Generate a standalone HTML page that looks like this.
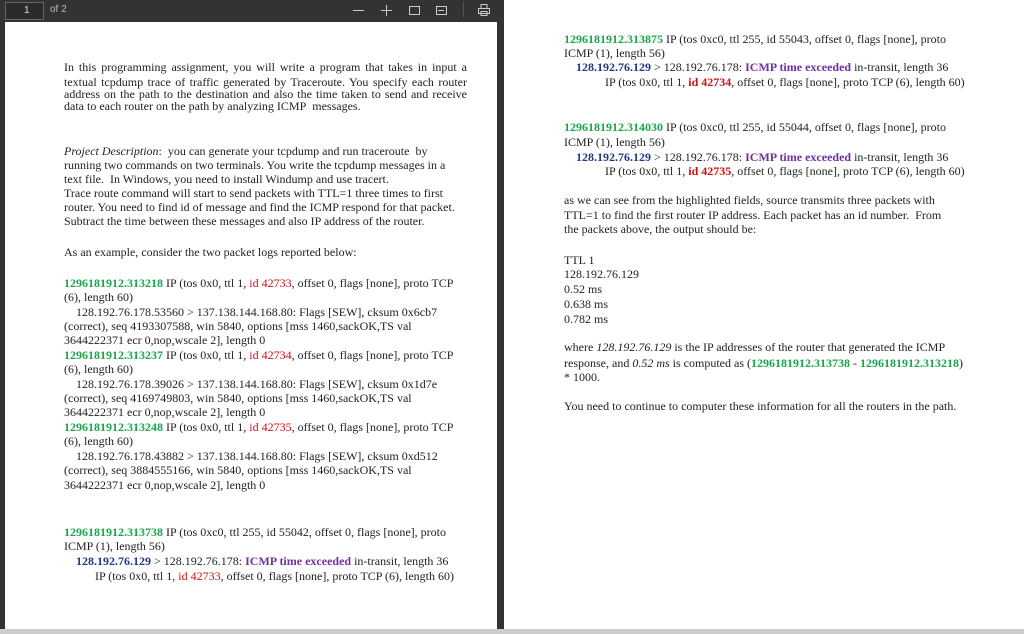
<!DOCTYPE html>
<html><head><meta charset="utf-8"><style>
body{margin:0;width:1024px;height:634px;overflow:hidden;background:#fff;position:relative;font-family:"Liberation Serif",serif;font-size:12px;color:#222}
.l{position:absolute;white-space:nowrap;line-height:14px}
.j{white-space:normal;text-align:justify;text-align-last:justify;height:14px;overflow:hidden}
.g{color:#1aa64a;font-weight:bold}
.r{color:#d01010}
.rb{color:#d01010;font-weight:bold}
.n{color:#1f3a80;font-weight:bold}
.p{color:#7030a0;font-weight:bold}
</style></head><body>
<div style="position:absolute;left:0;top:0;width:497px;height:22px;background:#333"></div>
<div style="position:absolute;left:5px;top:2px;width:37px;height:16px;border:1px solid #666;background:#2b2b2b;color:#ddd;font-family:'Liberation Sans',sans-serif;font-size:10px;line-height:16px;text-indent:18px">1</div>
<div style="position:absolute;left:50px;top:4px;color:#bbb;font-family:'Liberation Sans',sans-serif;font-size:10px">of 2</div>
<div style="position:absolute;left:353px;top:10px;width:11px;height:1px;background:#ccc"></div>
<div style="position:absolute;left:381px;top:10px;width:11px;height:1px;background:#ccc"></div>
<div style="position:absolute;left:386px;top:5px;width:1px;height:11px;background:#ccc"></div>
<div style="position:absolute;left:409px;top:6px;width:9px;height:7px;border:1px solid #ccc"></div>
<div style="position:absolute;left:436px;top:6px;width:9px;height:7px;border:1px solid #ccc"></div>
<div style="position:absolute;left:438px;top:10px;width:6px;height:1px;background:#ccc"></div>
<div style="position:absolute;left:463px;top:2px;width:1px;height:15px;background:#555"></div>
<svg style="position:absolute;left:477px;top:3px" width="14" height="14" viewBox="0 0 14 14" fill="none" stroke="#ccc"><rect x="4" y="1.5" width="6" height="4"/><rect x="1.5" y="5.5" width="11" height="5"/><rect x="4" y="8.5" width="6" height="4"/></svg>
<div style="position:absolute;left:0;top:22px;width:5px;height:612px;background:#333"></div>
<div style="position:absolute;left:497px;top:0;width:7px;height:634px;background:#333"></div>
<div style="position:absolute;left:0;top:629px;width:1024px;height:5px;background:#ccc"></div>

<div class="l j" style="left:64px;top:60px;width:403px">In this programming assignment, you will write a program that takes in input a</div>
<div class="l j" style="left:64px;top:75px;width:403px">textual tcpdump trace of traffic generated by Traceroute. You specify each router</div>
<div class="l j" style="left:64px;top:87px;width:403px">address on the path to the destination and also the time taken to send and receive</div>
<div class="l" style="left:64px;top:99px">data to each router on the path by analyzing ICMP&nbsp; messages.</div>

<div class="l" style="left:64px;top:144px"><i>Project Description</i>:&nbsp; you can generate your tcpdump and run traceroute&nbsp; by</div>
<div class="l" style="left:64px;top:158px">running two commands on two terminals. You write the tcpdump messages in a</div>
<div class="l" style="left:64px;top:172px">text file.&nbsp; In Windows, you need to install Windump and use tracert.</div>
<div class="l" style="left:64px;top:186px">Trace route command will start to send packets with TTL=1 three times to first</div>
<div class="l" style="left:64px;top:200px">router. You need to find id of message and find the ICMP respond for that packet.</div>
<div class="l" style="left:64px;top:214px">Subtract the time between these messages and also IP address of the router.</div>

<div class="l" style="left:64px;top:245px">As an example, consider the two packet logs reported below:</div>

<div class="l" style="left:64px;top:276px"><span class="g">1296181912.313218</span> IP (tos 0x0, ttl 1, <span class="r">id 42733</span>, offset 0, flags [none], proto TCP</div>
<div class="l" style="left:64px;top:290px">(6), length 60)</div>
<div class="l" style="left:64px;top:305px">&nbsp;&nbsp;&nbsp; 128.192.76.178.53560 &gt; 137.138.144.168.80: Flags [SEW], cksum 0x6cb7</div>
<div class="l" style="left:64px;top:319px">(correct), seq 4193307588, win 5840, options [mss 1460,sackOK,TS val</div>
<div class="l" style="left:64px;top:333px">3644222371 ecr 0,nop,wscale 2], length 0</div>
<div class="l" style="left:64px;top:348px"><span class="g">1296181912.313237</span> IP (tos 0x0, ttl 1, <span class="r">id 42734</span>, offset 0, flags [none], proto TCP</div>
<div class="l" style="left:64px;top:362px">(6), length 60)</div>
<div class="l" style="left:64px;top:377px">&nbsp;&nbsp;&nbsp; 128.192.76.178.39026 &gt; 137.138.144.168.80: Flags [SEW], cksum 0x1d7e</div>
<div class="l" style="left:64px;top:391px">(correct), seq 4169749803, win 5840, options [mss 1460,sackOK,TS val</div>
<div class="l" style="left:64px;top:405px">3644222371 ecr 0,nop,wscale 2], length 0</div>
<div class="l" style="left:64px;top:420px"><span class="g">1296181912.313248</span> IP (tos 0x0, ttl 1, <span class="r">id 42735</span>, offset 0, flags [none], proto TCP</div>
<div class="l" style="left:64px;top:434px">(6), length 60)</div>
<div class="l" style="left:64px;top:449px">&nbsp;&nbsp;&nbsp; 128.192.76.178.43882 &gt; 137.138.144.168.80: Flags [SEW], cksum 0xd512</div>
<div class="l" style="left:64px;top:463px">(correct), seq 3884555166, win 5840, options [mss 1460,sackOK,TS val</div>
<div class="l" style="left:64px;top:478px">3644222371 ecr 0,nop,wscale 2], length 0</div>

<div class="l" style="left:64px;top:525px"><span class="g">1296181912.313738</span> IP (tos 0xc0, ttl 255, id 55042, offset 0, flags [none], proto</div>
<div class="l" style="left:64px;top:539px">ICMP (1), length 56)</div>
<div class="l" style="left:76px;top:554px"><span class="n">128.192.76.129</span> &gt; 128.192.76.178: <span class="p">ICMP time exceeded</span> in-transit, length 36</div>
<div class="l" style="left:95px;top:569px">IP (tos 0x0, ttl 1, <span class="r">id 42733</span>, offset 0, flags [none], proto TCP (6), length 60)</div>

<div class="l" style="left:564px;top:32px"><span class="g">1296181912.313875</span> IP (tos 0xc0, ttl 255, id 55043, offset 0, flags [none], proto</div>
<div class="l" style="left:564px;top:46px">ICMP (1), length 56)</div>
<div class="l" style="left:576px;top:60px"><span class="n">128.192.76.129</span> &gt; 128.192.76.178: <span class="p">ICMP time exceeded</span> in-transit, length 36</div>
<div class="l" style="left:605px;top:75px">IP (tos 0x0, ttl 1, <span class="rb">id 42734</span>, offset 0, flags [none], proto TCP (6), length 60)</div>

<div class="l" style="left:564px;top:120px"><span class="g">1296181912.314030</span> IP (tos 0xc0, ttl 255, id 55044, offset 0, flags [none], proto</div>
<div class="l" style="left:564px;top:135px">ICMP (1), length 56)</div>
<div class="l" style="left:576px;top:150px"><span class="n">128.192.76.129</span> &gt; 128.192.76.178: <span class="p">ICMP time exceeded</span> in-transit, length 36</div>
<div class="l" style="left:605px;top:164px">IP (tos 0x0, ttl 1, <span class="rb">id 42735</span>, offset 0, flags [none], proto TCP (6), length 60)</div>

<div class="l" style="left:564px;top:193px">as we can see from the highlighted fields, source transmits three packets with</div>
<div class="l" style="left:564px;top:208px">TTL=1 to find the first router IP address. Each packet has an id number.&nbsp; From</div>
<div class="l" style="left:564px;top:222px">the packets above, the output should be:</div>

<div class="l" style="left:564px;top:253px">TTL 1</div>
<div class="l" style="left:564px;top:267px">128.192.76.129</div>
<div class="l" style="left:564px;top:282px">0.52 ms</div>
<div class="l" style="left:564px;top:297px">0.638 ms</div>
<div class="l" style="left:564px;top:312px">0.782 ms</div>

<div class="l" style="left:564px;top:340px">where <i>128.192.76.129</i> is the IP addresses of the router that generated the ICMP</div>
<div class="l" style="left:564px;top:356px">response, and <i>0.52 ms</i> is computed as (<span class="g">1296181912.313738</span> - <span class="g">1296181912.313218</span>)</div>
<div class="l" style="left:564px;top:370px">* 1000.</div>

<div class="l" style="left:564px;top:399px">You need to continue to computer these information for all the routers in the path.</div>
</body></html>
